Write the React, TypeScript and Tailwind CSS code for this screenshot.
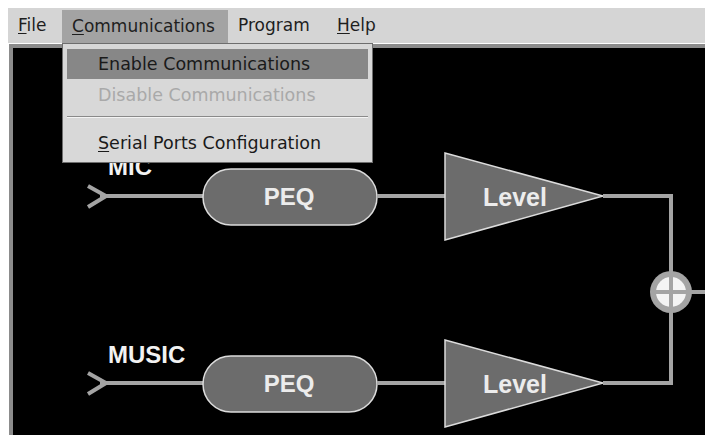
import React from "react";

const menuFont = { fontFamily: '"DejaVu Sans", Verdana, sans-serif' };

function Diagram() {
  const wire = "#a4a4a4";
  const fill = "#6c6c6c";
  const edge = "#dcdcdc";
  const labelFont = '"Liberation Sans", Arial, sans-serif';
  const channel = (y: number, label: string, labelY: number) => (
    <g>
      <text x={108} y={labelY} fill="#f2f2f2" fontFamily={labelFont} fontWeight="bold" fontSize={24}>
        {label}
      </text>
      <polyline points={`88,${y - 10} 106,${y} 88,${y + 11}`} fill="none" stroke={wire} strokeWidth={4} />
      <line x1={100} y1={y} x2={205} y2={y} stroke={wire} strokeWidth={4} />
      <rect x={203} y={y - 27} width={174} height={56} rx={28} fill={fill} stroke={edge} strokeWidth={1.5} />
      <text x={289} y={y + 9} textAnchor="middle" fill="#ececec" fontFamily={labelFont} fontWeight="bold" fontSize={24}>
        PEQ
      </text>
      <line x1={377} y1={y} x2={446} y2={y} stroke={wire} strokeWidth={4} />
      <polygon points={`445,${y - 43} 445,${y + 44} 603,${y}`} fill={fill} stroke={edge} strokeWidth={1.5} />
      <text x={483} y={y + 10} fill="#ececec" fontFamily={labelFont} fontWeight="bold" fontSize={25}>
        Level
      </text>
    </g>
  );
  return (
    <svg className="absolute inset-0" width={692} height={387} viewBox="13 48 692 387">
      {channel(196, "MIC", 175)}
      {channel(383, "MUSIC", 363)}
      <polyline points="603,196 671,196 671,383 603,383" fill="none" stroke={wire} strokeWidth={4} />
      <line x1={671} y1={292} x2={705} y2={292} stroke={wire} strokeWidth={4} />
      <circle cx={671} cy={292} r={21} fill={wire} />
      <circle cx={671} cy={292} r={15} fill="#f4f4f4" />
      <line x1={671} y1={276} x2={671} y2={308} stroke={wire} strokeWidth={4} />
      <line x1={655} y1={292} x2={687} y2={292} stroke={wire} strokeWidth={4} />
    </svg>
  );
}

export default function App() {
  return (
    <div className="relative w-[705px] h-[435px] bg-white pt-[8px] pl-[8px] overflow-hidden flex flex-col" style={menuFont}>
      {/* Menu bar */}
      <div className="h-[35px] bg-[#d5d5d5] flex items-stretch text-[17px] text-[#1e1e1e] shrink-0">
        <div className="w-[54px] pl-[10px] flex items-center">
          <span><u className="underline-offset-2">F</u>ile</span>
        </div>
        <div className="w-[166px] pl-[10px] mt-[2px] flex items-center bg-[#a3a3a3]">
          <span><u className="underline-offset-2">C</u>ommunications</span>
        </div>
        <div className="w-[99px] pl-[10px] flex items-center">
          <span>Program</span>
        </div>
        <div className="pl-[10px] flex items-center">
          <span><u className="underline-offset-2">H</u>elp</span>
        </div>
      </div>
      {/* Canvas */}
      <div className="relative flex-1 mt-px ml-px bg-black border-l-4 border-t-4 border-[#8c8c8c]">
        <Diagram />
      </div>
      {/* Dropdown menu */}
      <div className="absolute left-[62px] top-[43px] w-[311px] h-[120px] bg-[#d8d8d8] border border-[#6e6e6e] pt-[5px] px-[4px] text-[17.5px] flex flex-col">
        <div className="h-[30px] bg-[#878787] text-[#1a1a1a] pl-[31px] flex items-center">
          Enable Communications
        </div>
        <div className="h-[32px] text-[#a9a9a9] pl-[31px] flex items-center">
          Disable Communications
        </div>
        <div className="mt-[5px] h-[2px] border-t border-b border-t-[#8a8a8a] border-b-[#f4f4f4]" />
        <div className="mt-[8px] h-[34px] text-[#1a1a1a] pl-[31px] flex items-center">
          <span><u className="underline-offset-2">S</u>erial Ports Configuration</span>
        </div>
      </div>
    </div>
  );
}
